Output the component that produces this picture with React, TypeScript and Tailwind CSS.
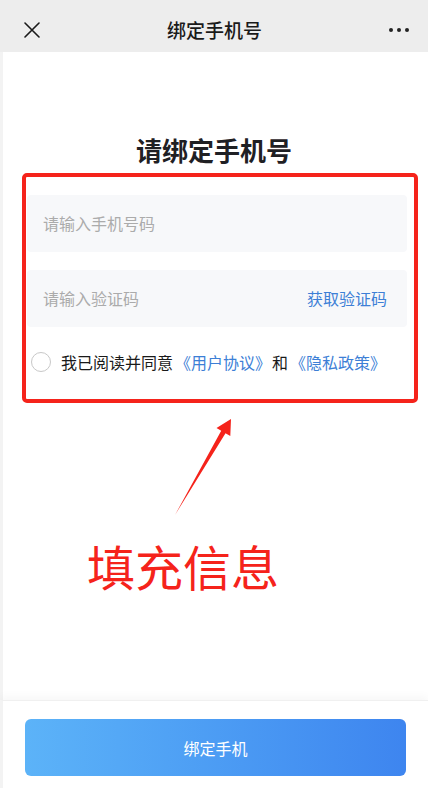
import React from "react";

const FONT = { fontFamily: '"Noto Sans CJK SC", "Noto Sans", sans-serif' };

export default function App() {
  return (
    <div className="w-[428px] h-[788px] bg-white flex flex-col overflow-hidden" style={FONT}>
      {/* Header */}
      <div className="h-[52px] bg-[#ededed] pt-[8px] shrink-0">
        <div className="h-[44px] flex items-center justify-between pl-[24px] pr-[19px]">
          <svg width="16" height="16" viewBox="0 0 16 16" className="block">
            <path d="M1 1 L15 15 M15 1 L1 15" stroke="#1a1a1a" strokeWidth="1.6" strokeLinecap="round" />
          </svg>
          <div className="text-[19px] leading-[44px] text-[#1a1a1a] font-medium">绑定手机号</div>
          <div className="flex items-center gap-[4px]">
            <span className="block w-[4px] h-[4px] rounded-full bg-[#222]" />
            <span className="block w-[4px] h-[4px] rounded-full bg-[#222]" />
            <span className="block w-[4px] h-[4px] rounded-full bg-[#222]" />
          </div>
        </div>
      </div>

      {/* Main */}
      <div className="flex-1 flex flex-col pt-[80px] border-l-[3px] border-[#f3f3f3]">
        <div className="h-[36px] leading-[36px] text-center text-[26px] font-bold text-[#1f2024] -ml-[3px]">
          请绑定手机号
        </div>

        <div className="mt-[5px] ml-[19px] w-[396px] border-[4px] border-[#f5231b] rounded-[5px] pt-[18px] pb-[19px] pl-[1px] pr-[7px] flex flex-col">
          <div className="h-[57px] bg-[#f7f8fa] rounded-[4px] flex items-center pl-[16px]">
            <span className="text-[16px] text-[#ababab] -mt-[2px]">请输入手机号码</span>
          </div>
          <div className="mt-[18px] h-[57px] bg-[#f7f8fa] rounded-[4px] flex items-center justify-between pl-[16px] pr-[20px]">
            <span className="text-[16px] text-[#ababab] -mt-[2px]">请输入验证码</span>
            <span className="text-[16px] text-[#3d7fd6] -mt-[2px]">获取验证码</span>
          </div>
          <div className="mt-[17px] h-[36px] flex items-center pl-[4px]">
            <span className="block w-[20px] h-[20px] rounded-full border border-[#c8c8c8] bg-white shrink-0" />
            <span className="ml-[10px] text-[16px] text-[#1a1a1a] whitespace-nowrap -mt-[1px]">
              我已阅读并同意<span className="text-[#3d7fd6] pl-[2px] pr-[1px]">《用户协议》</span>和<span className="text-[#3d7fd6] pl-[2px] pr-[1px]">《隐私政策》</span>
            </span>
          </div>
        </div>

        <svg width="425" height="110" viewBox="0 0 425 110" className="block mt-[6px] -ml-[3px]">
          <polygon
            points="175,106 221.2,21.7 216.5,19 231,10 230.3,27 225.5,24.3"
            fill="#f5231b"
          />
        </svg>

        <div className="mt-[22px] h-[48px] leading-[48px] text-[48px] text-[#f5231b] pl-[84px]">
          填充信息
        </div>
      </div>

      {/* Footer */}
      <div className="h-[88px] shrink-0 bg-white border-t border-[#f0f0f0] shadow-[0_-4px_8px_rgba(0,0,0,0.03)] pt-[18px] border-l-[3px] border-l-[#f3f3f3]">
        <div className="ml-[22px] w-[381px] h-[57px] rounded-[6px] bg-gradient-to-r from-[#5cb3f8] to-[#3e85ef] flex items-center justify-center">
          <span className="text-[16px] text-white">绑定手机</span>
        </div>
      </div>
    </div>
  );
}
